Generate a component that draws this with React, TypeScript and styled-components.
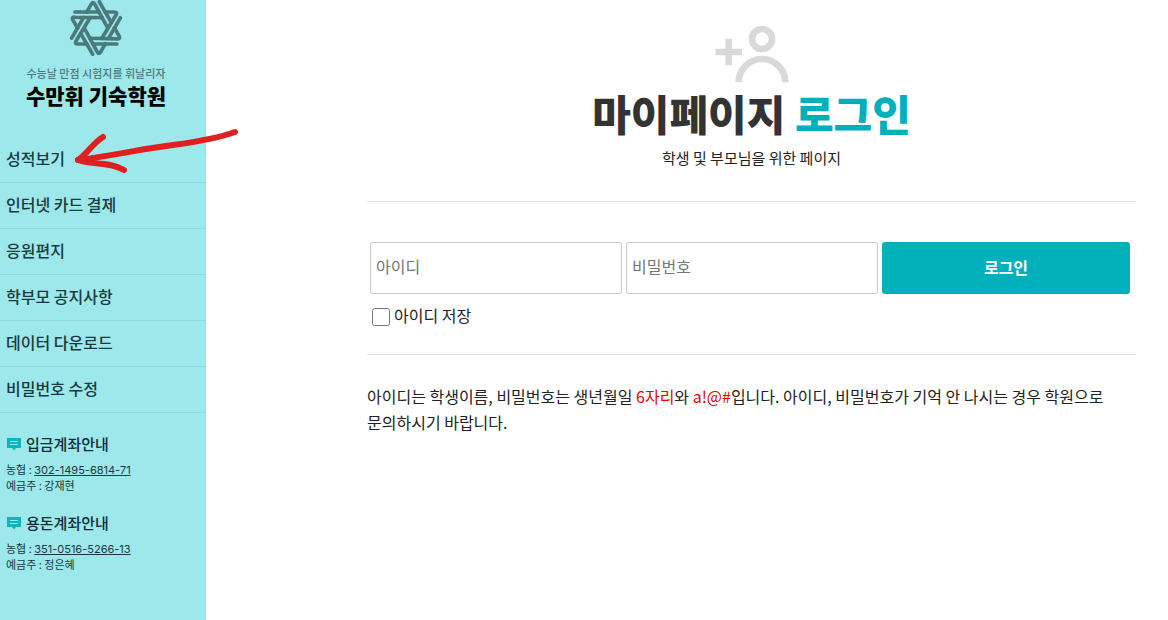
import React from "react";
import styled, { createGlobalStyle } from "styled-components";

const TEAL = "#00b1bb";

const GlobalStyle = createGlobalStyle`
  *, *::before, *::after { box-sizing: border-box; }
  body {
    margin: 0;
    background: #fff;
    color: #222;
    font-family: "Noto Sans CJK KR", sans-serif;
    font-size: 16px;
    line-height: 26px;
    word-break: keep-all;
  }
  a { color: inherit; text-decoration: none; }
  h1, h2, p { margin: 0; }
`;

const Page = styled.div`
  position: relative;
  display: flex;
  min-height: 100vh;
`;

const Sidebar = styled.aside`
  flex: 0 0 206px;
  background: #9ce8ea;
  color: #17393f;
`;

const Brand = styled.a`
  display: flex;
  flex-direction: column;
  align-items: center;
  height: 137px;
  padding-right: 14px;
  color: #4b7a7d;
  font-size: 11px;
  font-weight: 500;
  line-height: 18px;
`;

const BrandMark = styled.svg`
  width: 56px;
  height: 56px;
  margin-bottom: 8px;
`;

const BrandName = styled.strong`
  color: #000;
  font-size: 21px;
  font-weight: 900;
  line-height: 26px;
`;

const Menu = styled.ul`
  margin: 0;
  padding: 0;
  list-style: none;
`;

const MenuLink = styled.a`
  display: block;
  height: 46px;
  padding-left: 6px;
  border-bottom: 1px solid #8edbde;
  font-weight: 500;
  line-height: 42px;
`;

const Accounts = styled.div`
  display: grid;
  gap: 18px;
  padding: 19px 6px;
`;

const Account = styled.section`
  font-size: 11px;
  line-height: 15px;
`;

const AccountTitle = styled.h2`
  display: flex;
  align-items: center;
  gap: 5px;
  margin-bottom: 6px;
  padding-left: 1px;
  color: #0f2b33;
  font-size: 15px;
  font-weight: 500;
  line-height: 24px;
`;

const AccountNumber = styled.a`
  font-family: Inter, "Noto Sans CJK KR", sans-serif;
  text-decoration: underline;
  text-underline-offset: 1px;
`;

const Main = styled.main`
  flex: 1;
  min-width: 0;
  padding: 25px 32px 24px 161px;
`;

const Heading = styled.header`
  display: flex;
  flex-direction: column;
  align-items: center;
  padding-bottom: 30px;
  border-bottom: 1px solid #e4e4e4;
`;

const Title = styled.h1`
  margin: 5px 0 7px;
  color: #333;
  font-size: 42px;
  font-weight: 900;
  line-height: 50px;
  white-space: nowrap;
`;

const Accent = styled.span`
  color: ${TEAL};
`;

const Subtitle = styled.p`
  font-size: 15px;
`;

const LoginForm = styled.form`
  padding: 40px 6px 25px 3px;
  border-bottom: 1px solid #e4e4e4;
`;

const Fields = styled.div`
  display: grid;
  grid-template-columns: 252fr 252fr 248fr;
  gap: 4px;
`;

const TextField = styled.input`
  min-width: 0;
  height: 52px;
  padding: 0 5px 4px;
  border: 1px solid #c6c6c6;
  border-radius: 3px;
  font: inherit;
  &::placeholder { color: #757575; opacity: 1; }
`;

const SubmitButton = styled.button`
  height: 52px;
  padding-bottom: 3px;
  border: 0;
  border-radius: 3px;
  background: ${TEAL};
  color: #fff;
  font: inherit;
  font-weight: 700;
`;

const Remember = styled.label`
  display: flex;
  align-items: flex-start;
  gap: 4px;
  width: max-content;
  margin: 8px 0 1px 2px;
`;

const Checkbox = styled.input`
  width: 18px;
  height: 18px;
  margin: 6px 0 0;
`;

const Notice = styled.p`
  padding-top: 28px;
`;

const Mark = styled.span`
  color: #e60000;
`;

const Arrow = styled.svg`
  position: absolute;
  top: 120px;
  left: 70px;
  width: 176px;
  height: 60px;
  pointer-events: none;
`;

const menu = ["성적보기", "인터넷 카드 결제", "응원편지", "학부모 공지사항", "데이터 다운로드", "비밀번호 수정"];

const accounts = [
  { title: "입금계좌안내", number: "302-1495-6814-71", owner: "강재현" },
  { title: "용돈계좌안내", number: "351-0516-5266-13", owner: "정은혜" },
];

const Star = () => (
  <BrandMark viewBox="-28 -28 56 56" aria-hidden="true">
    {[0, 60, 120, 180, 240, 300].map((angle) => (
      <path
        key={angle}
        d="M-21-16H2.900M9-16H18Q22-16 20-13L5.900 10.300"
        transform={`rotate(${angle})`}
        fill="none"
        stroke="#4b7a7d"
        strokeWidth="3.700"
        strokeLinecap="round"
        strokeLinejoin="round"
      />
    ))}
  </BrandMark>
);

const BubbleIcon = () => (
  <svg width="14" height="14" viewBox="0 0 14 14" aria-hidden="true">
    <path d="M0 1H14V11H9L7 13.500L5 11H0Z" fill="#0fb3bc" />
    <path d="M3 4.500H11M3 7.500H11" stroke="#9ce8ea" />
  </svg>
);

const AddPersonIcon = () => (
  <svg width="75" height="58" viewBox="0 0 75 58" fill="none" stroke="#d9d9d9" strokeWidth="6.700" aria-hidden="true">
    <path d="M1.500 27H28M14.700 13.700V40.300" />
    <circle cx="48" cy="14" r="10" />
    <path d="M24.700 57.300A23.300 23.300 0 0 1 71.300 57.300" />
  </svg>
);

export default function App() {
  return (
    <>
      <GlobalStyle />
      <Page>
        <Sidebar>
          <Brand href="#">
            <Star />
            <span>수능날 만점 시험지를 휘날리자</span>
            <BrandName>수만휘 기숙학원</BrandName>
          </Brand>
          <nav>
            <Menu>
              {menu.map((item) => (
                <li key={item}>
                  <MenuLink href="#">{item}</MenuLink>
                </li>
              ))}
            </Menu>
          </nav>
          <Accounts>
            {accounts.map((account) => (
              <Account key={account.number}>
                <AccountTitle>
                  <BubbleIcon />
                  {account.title}
                </AccountTitle>
                <p>
                  농협 : <AccountNumber href="#">{account.number}</AccountNumber>
                </p>
                <p>예금주 : {account.owner}</p>
              </Account>
            ))}
          </Accounts>
        </Sidebar>
        <Main>
          <Heading>
            <AddPersonIcon />
            <Title>
              마이페이지 <Accent>로그인</Accent>
            </Title>
            <Subtitle>학생 및 부모님을 위한 페이지</Subtitle>
          </Heading>
          <LoginForm onSubmit={(e: React.FormEvent) => e.preventDefault()}>
            <Fields>
              <TextField type="text" placeholder="아이디" aria-label="아이디" />
              <TextField type="password" placeholder="비밀번호" aria-label="비밀번호" />
              <SubmitButton type="submit">로그인</SubmitButton>
            </Fields>
            <Remember>
              <Checkbox type="checkbox" />
              아이디 저장
            </Remember>
          </LoginForm>
          <Notice>
            아이디는 학생이름, 비밀번호는 생년월일 <Mark>6자리</Mark>와 <Mark>a!@#</Mark>입니다. 아이디, 비밀번호가 기억 안
            나시는 경우 학원으로 문의하시기 바랍니다.
          </Notice>
        </Main>
        <Arrow viewBox="70 120 176 60" fill="none" stroke="#e02020" strokeWidth="6" strokeLinecap="round" strokeLinejoin="round" aria-hidden="true">
          <path d="M235 132C216 139 195 142 173 145C140 149 118 155 78 160" />
          <path d="M103 137C92 144 87 154 78 160C91 165 109 161 124 170" />
        </Arrow>
      </Page>
    </>
  );
}
